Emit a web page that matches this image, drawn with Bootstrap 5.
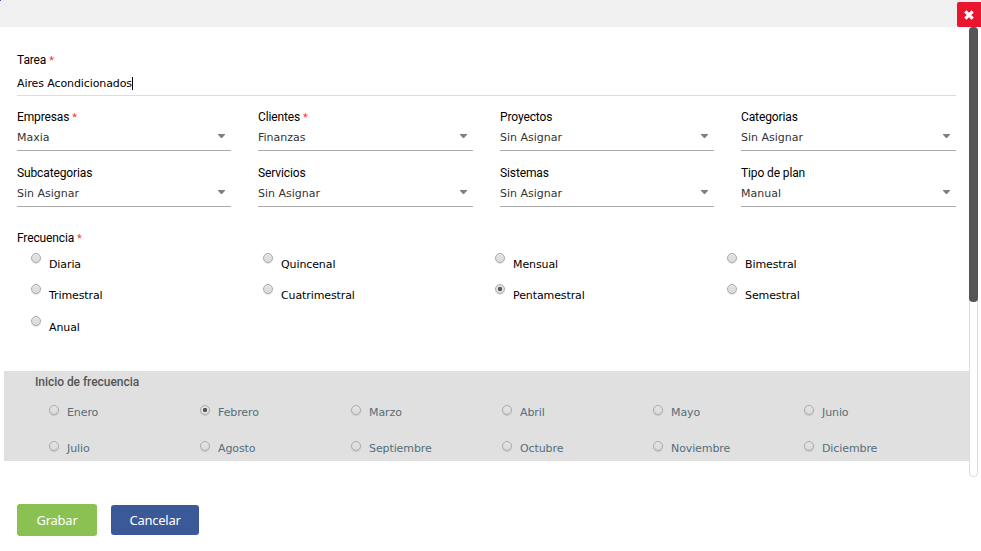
<!DOCTYPE html>
<html lang="es">
<head>
<meta charset="utf-8">
<meta name="viewport" content="width=device-width, initial-scale=1">
<title>Tarea</title>
<link href="https://cdn.jsdelivr.net/npm/bootstrap@5.3.0/dist/css/bootstrap.min.css" rel="stylesheet">
<style>
  body { font: 11px/16px "DejaVu Sans", Verdana, sans-serif; color: #000; overflow: hidden; letter-spacing: -.1px; }
  .dialog { height: 551px; }
  .dialog-top { height: 27px; background: #f0f0f0; }
  .close-btn { width: 24px; height: 25px; margin-top: 2px; background: #e9142d; border-radius: 2px 0 0 2px; }
  .corner-dot { width: 1px; height: 1px; background: #3b5998; }
  .dialog-main { height: 450px; }
  .scroll-content { min-width: 0; }
  .scroll-track { flex: none; width: 9px; height: 450px; margin-right: 3px; border: 1px solid #ddd; border-radius: 4px; }
  .scroll-thumb { width: 9px; height: 275px; margin: -1px 0 0 -1px; background: #555; border-radius: 4px; }
  .form-area { height: 344px; padding: 24px 13px 0 17px; }
  .field-label { display: block; height: 18px; font: 12px/18px Roboto, sans-serif; letter-spacing: -.12px; }
  .req { color: #f33; font-size: 11px; line-height: 1; }
  .task-input { display: block; width: 100%; height: 27px; padding: 2px 0 0; border: 0; border-bottom: 1px solid #ddd; background: none; line-height: 25px; }
  .typed { display: inline-block; height: 13px; line-height: 13px; border-right: 1px solid #000; }
  .fields { display: grid; grid-template-columns: 214px 215px 214px 215px; column-gap: 27px; row-gap: 13px; margin-top: 12px; }
  .pick { height: 25px; padding: 0 6px 4px 0; border-bottom: 1px solid #aaa; color: #333; letter-spacing: 0; }
  .pick span { padding-top: 4px; }
  .caret { width: 7px; height: 4px; background: #808080; clip-path: polygon(0 0, 100% 0, 100% 20%, 57% 100%, 43% 100%, 0 20%); }
  .freq-label { margin-top: 22px; }
  .freq-grid { display: grid; grid-template-columns: repeat(4, 232px); grid-template-rows: 31.4px 31.6px 31px; padding-left: 14px; margin-top: 6px; }
  .opt { display: flex; align-items: flex-start; gap: 8px; }
  .opt input { appearance: none; flex: none; width: 10px; height: 10px; margin: 0; border: 1px solid #aaa; border-radius: 50%; background: linear-gradient(#e4e4e4, #dadada); box-shadow: 0 1px 1px rgba(0,0,0,.12); }
  .opt input:checked { background: radial-gradient(circle at center, #555 0 1.9px, #e2e2e2 2.5px); }
  .freq-grid .opt span { margin-top: 4px; }
  .start-box { height: 90px; margin: 0 0 0 4px; padding: 2px 0 0 31px; background: #e0e0e0; color: #546e7a; }
  .start-title { font: 500 12px/18px Roboto, sans-serif; color: #555; letter-spacing: -.05px; }
  .month-grid { display: grid; grid-template-columns: repeat(6, 151px); grid-auto-rows: 36px; padding: 14px 0 0 14px; }
  .actions { padding: 27px 0 0 17px; gap: 14px; }
  .act { border: 0; border-radius: 3px; padding: 0; font: 13px/30px "Noto Sans", sans-serif; letter-spacing: -.25px; color: #fff; }
  .act-save { width: 80px; height: 32px; background: #8bc052; }
  .act-cancel { width: 88px; height: 30px; background: #3b5998; }
</style>
</head>
<body>
<div class="dialog d-flex flex-column bg-white">
  <header class="dialog-top d-flex justify-content-between">
    <i class="corner-dot"></i>
    <button class="close-btn btn p-0 border-0 d-flex align-items-center justify-content-center" aria-label="Cerrar">
      <svg width="10" height="10" viewBox="0 0 10 10"><path d="M1.3 1.3 8.7 8.7M8.7 1.3 1.3 8.7" stroke="#fff" stroke-width="3.2"/></svg>
    </button>
  </header>
  <main class="dialog-main d-flex">
    <div class="scroll-content flex-grow-1">
      <div class="form-area">
        <label class="field-label">Tarea <span class="req">*</span></label>
        <div class="task-input"><span class="typed">Aires Acondicionados</span></div>
        <div class="fields">
          <div><label class="field-label">Empresas <span class="req">*</span></label><div class="pick d-flex align-items-center justify-content-between"><span>Maxia</span><i class="caret"></i></div></div>
          <div><label class="field-label">Clientes <span class="req">*</span></label><div class="pick d-flex align-items-center justify-content-between"><span>Finanzas</span><i class="caret"></i></div></div>
          <div><label class="field-label">Proyectos</label><div class="pick d-flex align-items-center justify-content-between"><span>Sin Asignar</span><i class="caret"></i></div></div>
          <div><label class="field-label">Categorias</label><div class="pick d-flex align-items-center justify-content-between"><span>Sin Asignar</span><i class="caret"></i></div></div>
          <div><label class="field-label">Subcategorias</label><div class="pick d-flex align-items-center justify-content-between"><span>Sin Asignar</span><i class="caret"></i></div></div>
          <div><label class="field-label">Servicios</label><div class="pick d-flex align-items-center justify-content-between"><span>Sin Asignar</span><i class="caret"></i></div></div>
          <div><label class="field-label">Sistemas</label><div class="pick d-flex align-items-center justify-content-between"><span>Sin Asignar</span><i class="caret"></i></div></div>
          <div><label class="field-label">Tipo de plan</label><div class="pick d-flex align-items-center justify-content-between"><span>Manual</span><i class="caret"></i></div></div>
        </div>
        <label class="field-label freq-label">Frecuencia <span class="req">*</span></label>
        <div class="freq-grid">
          <label class="opt"><input type="radio" name="freq"><span>Diaria</span></label>
          <label class="opt"><input type="radio" name="freq"><span>Quincenal</span></label>
          <label class="opt"><input type="radio" name="freq"><span>Mensual</span></label>
          <label class="opt"><input type="radio" name="freq"><span>Bimestral</span></label>
          <label class="opt"><input type="radio" name="freq"><span>Trimestral</span></label>
          <label class="opt"><input type="radio" name="freq"><span>Cuatrimestral</span></label>
          <label class="opt"><input type="radio" name="freq" checked><span>Pentamestral</span></label>
          <label class="opt"><input type="radio" name="freq"><span>Semestral</span></label>
          <label class="opt"><input type="radio" name="freq"><span>Anual</span></label>
        </div>
      </div>
      <section class="start-box">
        <div class="start-title">Inicio de frecuencia</div>
        <div class="month-grid">
          <label class="opt"><input type="radio" name="mes"><span>Enero</span></label>
          <label class="opt"><input type="radio" name="mes" checked><span>Febrero</span></label>
          <label class="opt"><input type="radio" name="mes"><span>Marzo</span></label>
          <label class="opt"><input type="radio" name="mes"><span>Abril</span></label>
          <label class="opt"><input type="radio" name="mes"><span>Mayo</span></label>
          <label class="opt"><input type="radio" name="mes"><span>Junio</span></label>
          <label class="opt"><input type="radio" name="mes"><span>Julio</span></label>
          <label class="opt"><input type="radio" name="mes"><span>Agosto</span></label>
          <label class="opt"><input type="radio" name="mes"><span>Septiembre</span></label>
          <label class="opt"><input type="radio" name="mes"><span>Octubre</span></label>
          <label class="opt"><input type="radio" name="mes"><span>Noviembre</span></label>
          <label class="opt"><input type="radio" name="mes"><span>Diciembre</span></label>
        </div>
      </section>
    </div>
    <div class="scroll-track"><div class="scroll-thumb"></div></div>
  </main>
  <footer class="actions d-flex align-items-center">
    <button class="act act-save">Grabar</button>
    <button class="act act-cancel">Cancelar</button>
  </footer>
</div>
<script src="https://cdn.jsdelivr.net/npm/bootstrap@5.3.0/dist/js/bootstrap.bundle.min.js"></script>
</body>
</html>
